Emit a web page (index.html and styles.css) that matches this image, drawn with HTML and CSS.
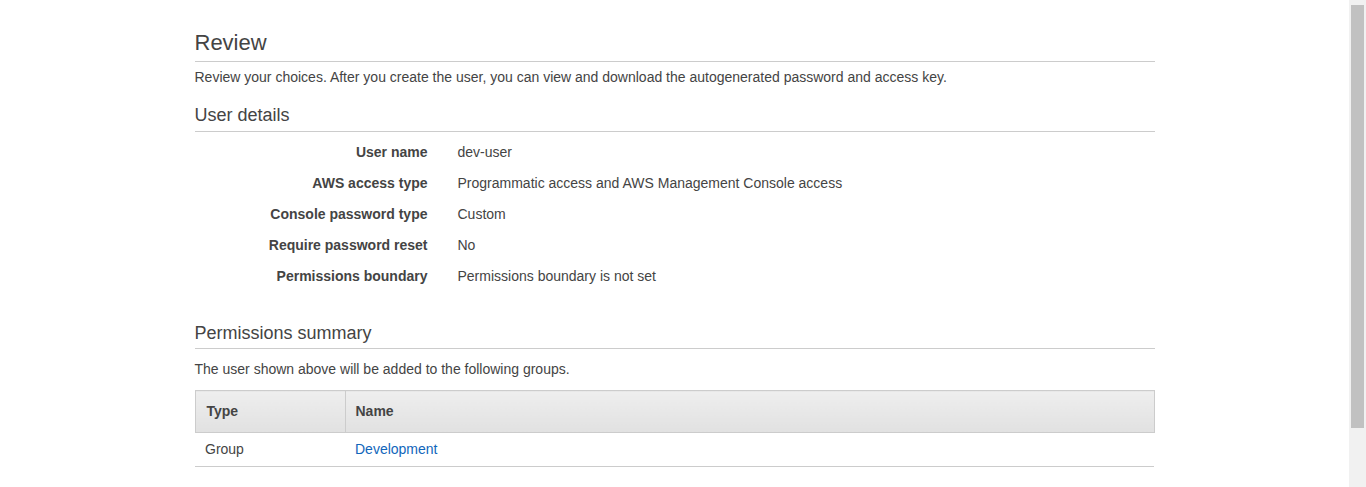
FILE: index.html
```html
<!DOCTYPE html>
<html lang="en">
<head>
<meta charset="utf-8">
<title>Review</title>
<link rel="stylesheet" href="styles.css">
</head>
<body>
<div class="page">
  <main class="content">
    <h1 class="title">Review</h1>
    <p class="lead">Review your choices. After you create the user, you can view and download the autogenerated password and access key.</p>

    <h2 class="section">User details</h2>
    <dl class="details">
      <dt>User name</dt><dd>dev-user</dd>
      <dt>AWS access type</dt><dd>Programmatic access and AWS Management Console access</dd>
      <dt>Console password type</dt><dd>Custom</dd>
      <dt>Require password reset</dt><dd>No</dd>
      <dt>Permissions boundary</dt><dd>Permissions boundary is not set</dd>
    </dl>

    <h2 class="section section-perm">Permissions summary</h2>
    <p class="note">The user shown above will be added to the following groups.</p>
    <table class="groups">
      <thead>
        <tr><th class="col-type">Type</th><th>Name</th></tr>
      </thead>
      <tbody>
        <tr><td>Group</td><td><a href="#" class="link">Development</a></td></tr>
      </tbody>
    </table>
  </main>
  <div class="scrollbar"><div class="thumb"></div></div>
</div>
</body>
</html>
```

FILE: styles.css
```css
html, body {
  margin: 0;
  padding: 0;
  height: 100%;
  overflow: hidden;
  background: #fff;
}

body {
  font-family: "Liberation Sans", Arial, sans-serif;
  font-size: 14px;
  color: #444;
}

.page {
  display: flex;
  height: 100%;
}

.content {
  flex: 1;
  min-width: 0;
  display: flex;
  flex-direction: column;
  align-items: center;
  padding-top: 30px;
}

.content > * {
  width: 960px;
  box-sizing: border-box;
}

.title {
  margin: 0;
  font-size: 22px;
  line-height: 26px;
  font-weight: normal;
  color: #444;
  padding-bottom: 5px;
  border-bottom: 1px solid #ccc;
}

.lead {
  margin: 5px 0 0;
  line-height: 20px;
}

.section {
  margin: 17px 0 0;
  font-size: 18px;
  line-height: 22px;
  font-weight: normal;
  color: #444;
  padding-bottom: 5px;
  border-bottom: 1px solid #ccc;
}

.details {
  margin: 10px 0 0;
  display: grid;
  grid-template-columns: 233px 1fr;
  column-gap: 30px;
  row-gap: 11px;
  line-height: 20px;
}

.details dt {
  font-weight: bold;
  text-align: right;
}

.details dd {
  margin: 0;
}

.section-perm {
  margin-top: 36px;
  padding-bottom: 4px;
}

.note {
  margin: 10px 0 0;
  line-height: 20px;
}

.groups {
  margin-top: 11px;
  border-collapse: collapse;
  width: 960px;
}

.groups th {
  text-align: left;
  font-weight: bold;
  height: 39px;
  padding: 0 10px 2px;
  background: linear-gradient(#eeeeee, #e1e1e1);
  border: 1px solid #ccc;
  line-height: 20px;
}

.groups .col-type {
  width: 128px;
  padding-left: 11px;
}

.groups td {
  height: 31px;
  padding: 0 10px 2px;
  border-bottom: 1px solid #ccc;
  line-height: 20px;
}

.link {
  color: #1166bb;
  text-decoration: none;
}

.scrollbar {
  width: 17px;
  flex: none;
  background: #f1f1f1;
  box-sizing: border-box;
  padding: 5px 2px 0;
}

.thumb {
  height: 423px;
  background: #c1c1c1;
}
```
